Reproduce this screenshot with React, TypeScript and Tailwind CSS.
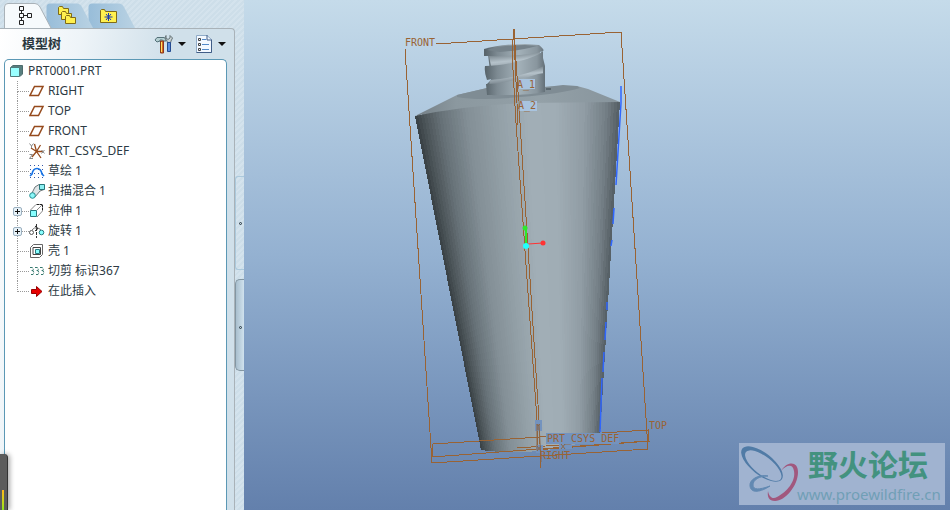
import { useState, type ReactNode } from "react";

type RGB = [number, number, number];

const bodyStops: [number, RGB][] = [
  [0, [56, 64, 67]],
  [0.04, [74, 83, 87]],
  [0.12, [102, 113, 119]],
  [0.25, [131, 143, 150]],
  [0.4, [147, 160, 167]],
  [0.55, [161, 174, 182]],
  [0.68, [160, 173, 181]],
  [0.82, [145, 157, 165]],
  [0.93, [117, 128, 135]],
  [1, [84, 93, 99]],
];

function shade(t: number) {
  const i = Math.max(1, bodyStops.findIndex(([p]) => p >= t));
  const [p0, a] = bodyStops[i - 1];
  const [p1, b] = bodyStops[i];
  const k = (t - p0) / (p1 - p0);
  return `rgb(${a.map((v, n) => Math.round(v + (b[n] - v) * k)).join(",")})`;
}

const STRIPS = 70;
const rim = (t: number) => [415 + 205 * t, 116 - 14 * t - 34 * t * (1 - t)];
const base = (t: number) => [481 + 119 * t, 450 - 13 * t * t + 16 * t * (1 - t)];

function BottleBody() {
  return (
    <g shapeRendering="crispEdges">
      {Array.from({ length: STRIPS }, (_, i) => {
        const a = i / STRIPS;
        const b = Math.min(1, (i + 2) / STRIPS);
        const pts = [rim(a), rim(b), base(b), base(a)];
        return <polygon key={i} points={pts.map((p) => p.join(",")).join(" ")} fill={shade((i + 0.5) / STRIPS)} />;
      })}
    </g>
  );
}

function Model() {
  return (
    <svg viewBox="244 0 706 510" className="block h-full w-full" role="img" aria-label="PRT0001">
      <defs>
        <linearGradient id="neck" x1="485" x2="546" y1="0" y2="0" gradientUnits="userSpaceOnUse">
          <stop offset="0" stopColor="#58646b" />
          <stop offset="0.2" stopColor="#7d8a92" />
          <stop offset="0.55" stopColor="#a3b1b9" />
          <stop offset="0.85" stopColor="#89969e" />
          <stop offset="1" stopColor="#5f6b73" />
        </linearGradient>
        <linearGradient id="groove" x1="0" x2="0.2" y1="0" y2="1">
          <stop offset="0" stopColor="#4f5b62" />
          <stop offset="0.5" stopColor="#b5c2ca" />
          <stop offset="1" stopColor="#6f7b83" />
        </linearGradient>
        <linearGradient id="shoulder" x1="415" x2="620" y1="0" y2="0" gradientUnits="userSpaceOnUse">
          <stop offset="0" stopColor="#747f86" />
          <stop offset="0.2" stopColor="#8b989f" />
          <stop offset="0.6" stopColor="#94a1a8" />
          <stop offset="1" stopColor="#87949c" />
        </linearGradient>
      </defs>

      <BottleBody />
      <path
        d="M621 86V103L616 185M614 208L613 224M612 240L611 246M607 302V310M606 322L605 340M604 352L603 372M602 378L600 432"
        fill="none"
        stroke="#2f66ff"
        strokeWidth="1.500"
      />
      <path d="M415 116L457 95L487 88L577 86L588 89L620 102Q590 102 533 103Q475 104 415 116Z" fill="url(#shoulder)" />
      <path d="M457 95L487 88L546 87L563 85L577 86L580 88Q560 94 520 97Q480 101 457 97Z" fill="#7f8c94" />

      <path d="M488 54H541V50L545 66V92Q530 95 505 95Q492 96 487 94V84L491 80Z" fill="url(#neck)" />
      <path d="M489 56Q520 57 540 50V66Q520 68 489 75L491 66Z" fill="url(#groove)" />
      <path d="M490 80Q525 77 543 66V75Q520 78 489 86Z" fill="url(#groove)" />
      <path d="M484 49Q500 44 525 44L539 45Q545 50 543 51Q530 56 484 56Z" fill="url(#neck)" />
      <path d="M487 50Q500 45 525 45L537 46Q524 50 500 52Z" fill="#75828a" />
      <path d="M485 66Q500 66 520 61Q538 56 543 51V66Q525 74 501 77L487 80Q484 72 485 66Z" fill="url(#neck)" />
      <path d="M486 84Q510 84 538 74L545 73V91Q528 95 487 95Z" fill="url(#neck)" />
      <path d="M546 89H551" stroke="#39444b" />

      <g fill="none" stroke="#996334" strokeWidth="1" shapeRendering="crispEdges">
        <path d="M405 49L432 463L648 449M436 44L621 32L648 449" />
        <path d="M433 444L648 430V441L432 457V444" />
        <path d="M514 29L512 52L516 123L537 420V450M514 29L520 123L539 420L541 468M514 38L518 125" />
        <path d="M517 448L560 445M535 450L650 441" />
      </g>

      <g fill="#7493be">
        <rect x="535" y="420" width="7" height="11" />
        <rect x="546" y="433" width="73" height="11" />
        <rect x="536" y="445" width="7" height="8" />
        <rect x="559" y="444" width="13" height="5" />
      </g>
      <g fill="#a9c4df">
        <rect x="518" y="79" width="17" height="10" />
        <rect x="518" y="101" width="19" height="10" />
      </g>
      <path
        d="M537 424L538 426L540 424M538 426V430M537 424V450M539 424L541 462M537 446L541 451M541 446L537 451M561 444L565 449M565 444L561 449M518 79V89M519 101V111"
        fill="none"
        stroke="#8a6749"
      />
      <g fill="#996334" className="font-['DejaVu_Sans_Mono',monospace] text-[10px]">
        <text x="405" y="46">FRONT</text>
        <text x="517" y="88">A_1</text>
        <text x="518" y="109">A_2</text>
        <text x="547" y="442">PRT_CSYS_DEF</text>
        <text x="540" y="459">RIGHT</text>
        <text x="649" y="429">TOP</text>
      </g>

      <path d="M526 228V245" stroke="#2de82d" strokeWidth="2" />
      <path d="M528 244L543 243" stroke="#f33" />
      <circle cx="525" cy="228" r="2.500" fill="#2de82d" />
      <circle cx="543" cy="243" r="2.500" fill="#f33" />
      <circle cx="526" cy="246" r="3" fill="#2ff" />
    </svg>
  );
}

function Icon({ children }: { children: ReactNode }) {
  return (
    <svg width="16" height="16" viewBox="0 0 16 16" fill="none" className="shrink-0" aria-hidden="true">
      {children}
    </svg>
  );
}

const icons = {
  plane: <path d="M5.500 3.500H14L9.500 12.500H1Z" stroke="#954a1c" strokeWidth="1.500" />,
  csys: (
    <>
      <path d="M7.500 8.500H14M7.500 8.500L2 5M7.500 8.500L3 14M7.500 8.500L11.500 2M7.500 8.500L12 15M7.500 8.500L5.500 1" stroke="#954a1c" strokeWidth="1.300" />
      <path d="M0.500 0.500L2.500 3L4.500 0.500M2.500 3V5M0.500 11.500H3.500L0.500 15.500H4M12.500 7L15.500 10.500M15.500 7L12.500 10.500" stroke="#888" />
    </>
  ),
  sketch: (
    <>
      <path d="M1 2.500H15M1 6.500H15M1 10.500H15M1 14.500H15" stroke="#3558a8" strokeDasharray="1 3" />
      <path d="M1 13L3 11Q4 5.500 8 5.500Q12 5.500 13 11L15 13" stroke="#1673e6" strokeWidth="1.600" />
    </>
  ),
  blend: (
    <>
      <path d="M3 10L6 4L10 1.500H15V6.500L11 8L6 14" fill="#e0e6e8" stroke="#6d7779" />
      <path d="M10.500 1.500H15.500V6.500H10.500Z" fill="#8cf0f2" stroke="#27777b" />
      <circle cx="3.500" cy="12.500" r="2.800" fill="#8cf7f8" stroke="#258c90" />
    </>
  ),
  extrude: (
    <>
      <path d="M1.500 7L7 1.500H13.500V8L8 14M8 7L13 2" fill="#fff" stroke="#888" />
      <path d="M1.500 7.500H7.500V13.500H1.500Z" fill="#8ff" stroke="#267b80" />
      <path d="M8 1.500H13.500V7" stroke="#222" strokeDasharray="2 1" />
    </>
  ),
  revolve: (
    <>
      <path d="M7.500 1V15" stroke="#333" strokeDasharray="3 1" />
      <circle cx="2.500" cy="9.500" r="2" stroke="#555" />
      <path d="M3 7Q5 4 8 5Q10 5 12 7" stroke="#777" />
      <circle cx="12.500" cy="9.500" r="2.300" fill="#8ff" stroke="#287a80" />
      <path d="M6 3L9 5.500L6 8" stroke="#222" />
    </>
  ),
  shell: (
    <>
      <path d="M1.500 4.500L4.500 1.500H13.500V11.500L10.500 14.500H1.500Z" stroke="#666" />
      <path d="M4 4.500H11.500V11.500H4Z" stroke="#444" />
      <path d="M6.500 6.500H10.500V10.500H6.500Z" fill="#8ff" stroke="#287a80" />
    </>
  ),
  cut: (
    <path
      d="M1 4.500H3Q5 5 4 7.500H2M3 7.500Q6 8 4 11.500H1M6 4.500H8Q10 5 9 7.500H7M8 7.500Q11 8 9 11.500H6M11 4.500H13Q15 5 14 7.500H12M13 7.500Q16 8 14 11.500H11"
      stroke="#34786e"
      strokeDasharray="3 1"
    />
  ),
  insert: <path d="M2.500 6.500H7.500V3.500L13 8.500L7.500 13.500V10.500H2.500Z" fill="#e80000" stroke="#900" />,
};

const features: { icon: keyof typeof icons; label: string; expandable?: boolean }[] = [
  { icon: "plane", label: "RIGHT" },
  { icon: "plane", label: "TOP" },
  { icon: "plane", label: "FRONT" },
  { icon: "csys", label: "PRT_CSYS_DEF" },
  { icon: "sketch", label: "草绘 1" },
  { icon: "blend", label: "扫描混合 1" },
  { icon: "extrude", label: "拉伸 1", expandable: true },
  { icon: "revolve", label: "旋转 1", expandable: true },
  { icon: "shell", label: "壳 1" },
  { icon: "cut", label: "切剪 标识367" },
  { icon: "insert", label: "在此插入" },
];

function FeatureTree() {
  return (
    <div className="mr-[7px] ml-1 flex-1 rounded-t-[5px] border border-b-0 border-[#5b98b5] bg-white pt-px text-xs leading-5">
      <button type="button" className="flex h-5 items-center gap-[3px] pl-1">
        <Icon>
          <path d="M1.500 4.500L4 2.500H13.500V11L11 13.500" fill="#587f80" stroke="#4d6c6d" />
          <path d="M1.500 4.500H10.500V13.500H1.500Z" fill="#9ff" stroke="#507b7c" />
        </Icon>
        <span>PRT0001.PRT</span>
      </button>
      <ul className="pl-3">
        {features.map((f, i) => (
          <li key={f.label} className="relative flex h-5 items-center">
            <span className="flex h-5 w-3 flex-col">
              <span className="h-[11px] border-b border-l border-dotted border-[#999]" />
              {i < features.length - 1 && <span className="flex-1 border-l border-dotted border-[#999]" />}
            </span>
            {f.expandable && (
              <button
                type="button"
                aria-label={`展开 ${f.label}`}
                className="absolute top-1.5 -left-1 flex size-[9px] items-center justify-center rounded-xs border border-[#9bb0c0] bg-[#e8f2f8]"
              >
                <svg width="5" height="5" viewBox="0 0 5 5" className="shrink-0" aria-hidden="true">
                  <path d="M0 2.500H5M2.500 0V5" stroke="#111" />
                </svg>
              </button>
            )}
            <button type="button" className="flex items-center gap-[3px] whitespace-nowrap">
              <Icon>{icons[f.icon]}</Icon>
              <span>{f.label}</span>
            </button>
          </li>
        ))}
      </ul>
    </div>
  );
}

function Folder({ x, y, w = 10, h = 8 }: { x: number; y: number; w?: number; h?: number }) {
  return (
    <path
      d={`M${x} ${y + h}V${y + 1}L${x + 1} ${y}H${x + 4}L${x + 5} ${y + 2}H${x + w}V${y + h}Z`}
      fill="#fff04e"
      stroke="#806b16"
    />
  );
}

const tabs: { name: string; layer: string; art: ReactNode }[] = [
  {
    name: "模型树",
    layer: "z-30",
    art: (
      <path
        d="M15.500 3.500h4v4h-4zM15.500 10.500h4v4h-4zM15.500 17.500h4v4h-4zM23.500 10.500h4v4h-4zM17.500 7.500v3M17.500 14.500v3M19.500 12.500h4"
        fill="none"
        stroke="#222"
      />
    ),
  },
  {
    name: "文件夹浏览器",
    layer: "z-20",
    art: (
      <>
        <Folder x={12.5} y={3.5} />
        <Folder x={15.5} y={8.5} />
        <Folder x={19.5} y={12.5} />
      </>
    ),
  },
  {
    name: "收藏夹",
    layer: "z-10",
    art: (
      <>
        <Folder x={12.5} y={6.5} w={16} h={13} />
        <path d="M20.500 10V18M16.500 14H24.500M18 11L23 17M23 11L18 17" stroke="#1b3cb0" />
      </>
    ),
  },
];

function Tabs() {
  const [active, setActive] = useState(0);
  return (
    <div role="tablist" className="isolate flex h-7 items-end pl-1">
      {tabs.map((t, i) => (
        <button
          key={t.name}
          type="button"
          role="tab"
          aria-label={t.name}
          aria-selected={active === i}
          onClick={() => setActive(i)}
          className={`relative h-[25px] w-[42px] ${t.layer}`}
        >
          <svg width="48" height="25" viewBox="0 0 48 25" className="max-w-none" aria-hidden="true">
            <defs>
              <linearGradient id="tab-idle">
                <stop offset="0" stopColor="#98bdd9" />
                <stop offset="1" stopColor="#b9d2e3" />
              </linearGradient>
            </defs>
            <path
              d="M0.500 25V4Q0.500 0.500 4 0.500H31Q34 0.500 36 4L47 25"
              fill={active === i ? "#f6fafc" : "url(#tab-idle)"}
              stroke={active === i ? "#a9b2b8" : "none"}
            />
            {t.art}
          </svg>
        </button>
      ))}
    </div>
  );
}

function Caret() {
  return (
    <svg width="8" height="4" viewBox="0 0 8 4" aria-hidden="true">
      <path d="M0 0H8L4 4Z" fill="#111" />
    </svg>
  );
}

function Toolbar() {
  return (
    <div className="flex h-[30px] items-center pr-2 pl-[22px]">
      <h1 className="flex-1 text-[13px] font-bold text-[#2b3840]">模型树</h1>
      <button type="button" aria-label="设置" className="mr-[10px] flex items-center gap-1">
        <svg width="20" height="20" viewBox="0 0 20 20" fill="none" aria-hidden="true">
          <path d="M1 6L3 3.500H10L12 5V7H9.500L8.500 6H6V7L3 8Z" fill="#b4cfd2" stroke="#557179" />
          <path d="M6.500 7H9.500V19H6.500Z" fill="#d8642a" stroke="#8a3a18" />
          <path d="M7.500 8V18" stroke="#ffe55c" />
          <path d="M12 1.500V4L14 5.500L16 4V1.500L18.500 4L17 7L16.500 9H13.500L13 7L11 4Z" fill="#c9d2d4" stroke="#667478" />
          <path d="M13.500 8.500H16.500V17.500H13.500Z" fill="#5b8fe0" stroke="#244b91" />
        </svg>
        <Caret />
      </button>
      <button type="button" aria-label="显示" className="flex items-center gap-1">
        <svg width="18" height="20" viewBox="0 0 18 20" fill="none" aria-hidden="true">
          <path d="M0.500 1.500H11L15.500 5.500V18.500H0.500Z" fill="#f2f8ff" stroke="#8fabc8" />
          <path d="M11 1V6H16M0.500 18.500H15.500V6" stroke="#405d87" />
          <path d="M6 5.500H10M6 10.500H13M6 15.500H13" stroke="#5289c8" />
          <path d="M2.500 4.500h2v2h-2zM2.500 9.500h2v2h-2zM2.500 14.500h2v2h-2z" stroke="#444" />
        </svg>
        <Caret />
      </button>
    </div>
  );
}

function Splitter() {
  return (
    <div className="flex w-[9px] flex-col gap-[9px] pt-[148px]">
      <button
        type="button"
        aria-label="折叠导航器"
        className="flex h-[94px] items-center justify-center rounded-l-[3px] border border-r-0 border-[#abc9dc]"
      >
        <span className="size-[3px] rounded-full border border-[#263640]" />
      </button>
      <button
        type="button"
        aria-label="折叠浏览器"
        className="flex h-[92px] items-center justify-center rounded-l-[5px] border border-r-0 border-[#8396a2] bg-linear-to-r from-[#a9bfce] to-[#d0e2ee] pt-1"
      >
        <span className="size-[3px] rounded-full border border-[#263640]" />
      </button>
    </div>
  );
}

function Watermark() {
  return (
    <div className="absolute right-[5px] bottom-[5px] flex h-[62px] w-[206px] bg-[#a0b3d0]">
      <svg width="58" height="62" viewBox="0 0 58 62" fill="none" className="shrink-0 overflow-visible" aria-hidden="true">
        <path
          fillRule="evenodd"
          transform="translate(23 21) rotate(38)"
          d="M-25 0A25 11 0 0 1 25 0A25 11 0 0 1 -25 0ZM-20 0.500A22 9 0 0 0 24 0.500A22 9 0 0 0 -20 0.500Z"
          fill="#507ba6"
        />
        <path d="M29 33C19 31 10 37 11 43C12 51 22 49 31 43C20 47 14 47 14 42C14 37 20 33 29 33Z" fill="#6289b2" stroke="#6289b2" />
        <path
          d="M42 28C48 18 59 18 59 29C59 43 46 58 36 58C30 58 28 54 29 48C30 53 33 57 38 54C48 49 57 38 55 28C54 20 47 22 42 28Z"
          fill="#a1587e"
        />
      </svg>
      <div className="flex flex-col whitespace-nowrap">
        <span className="pl-[11px] font-['Noto_Sans_CJK_SC',sans-serif] text-[30px] leading-[40px] font-bold text-[#43927f]">
          野火论坛
        </span>
        <span className="font-['Noto_Sans',sans-serif] text-[15px] leading-[22px] text-[#709fb6]">
          www.proewildfire.cn
        </span>
      </div>
    </div>
  );
}

export default function App() {
  return (
    <div className="flex h-screen overflow-hidden font-['Noto_Sans','Noto_Sans_CJK_SC',sans-serif] text-[#2c3a44]">
      <aside className="relative flex w-[244px] shrink-0 flex-col bg-[repeating-linear-gradient(135deg,#cddee9_0px,#cddee9_2px,#d4e3ed_2px,#d4e3ed_4px)]">
        <Tabs />
        <div className="flex min-h-0 flex-1">
          <div className="flex min-w-0 flex-1 flex-col rounded-tr-[4px] border-t border-r border-[#a9b2b8] bg-[linear-gradient(100deg,#ffffff_0px,#eef4f8_80px,#d0e0ea_170px)]">
            <Toolbar />
            <FeatureTree />
          </div>
          <Splitter />
        </div>
        <div className="absolute bottom-0 left-0 flex h-14 w-2 items-end rounded-tr-[4px] border-r border-[#333] bg-[#5c5c5c] pl-0.5 shadow-[2px_0_5px_#0005]">
          <div className="h-5 w-0.5 bg-linear-to-b from-[#ffb819] to-[#8ce519]" />
        </div>
      </aside>
      <main className="relative min-w-0 flex-1 bg-linear-to-b from-[#c5dbea] via-[#94b1d1] to-[#6380ac]">
        <Model />
        <Watermark />
      </main>
    </div>
  );
}
